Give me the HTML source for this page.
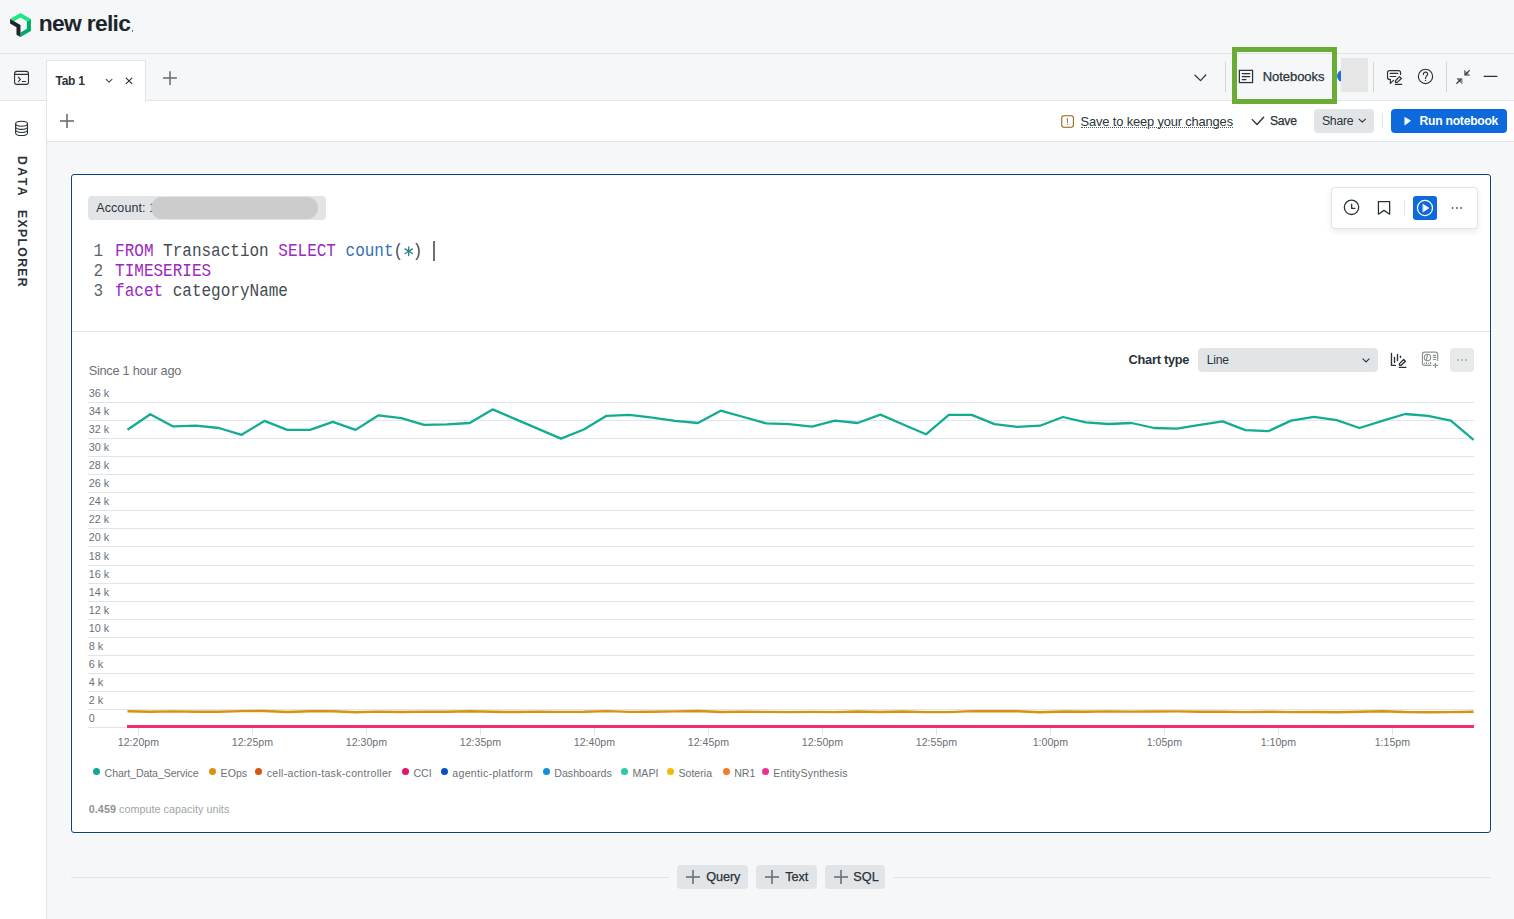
<!DOCTYPE html>
<html><head><meta charset="utf-8"><style>
*{box-sizing:border-box;margin:0;padding:0}
html,body{width:1514px;height:919px;overflow:hidden;background:#f6f7f9;font-family:"Liberation Sans",sans-serif;color:#293338}
.a{position:absolute}
.t{position:absolute;white-space:nowrap;line-height:1}
svg{position:absolute;overflow:visible}
#hdr{left:0;top:0;width:1514px;height:54px;background:#f6f7f9;border-bottom:1px solid #e1e5e8}
#tabbar{left:0;top:54px;width:1514px;height:47px;background:#f6f7f9;border-bottom:1px solid #e1e5e8}
#side{left:0;top:101px;width:47px;height:818px;background:#fff;border-right:1px solid #e1e5e8}
#sidetop{left:0;top:54px;width:47px;height:47px}
#tab1{left:46px;top:60px;width:100px;height:42px;background:#fff;border:1px solid #e1e5e8;border-bottom:none}
#toolbar{left:47px;top:101px;width:1467px;height:41px;background:#fff;border-bottom:1px solid #e1e5e8}
#card{left:71px;top:174px;width:1420px;height:659px;background:#fff;border:1px solid #0d3f7e;border-radius:3px;box-shadow:0 0 0 1px #fff}
.sep{position:absolute;width:1px;background:#cfd3d6}
.btn-g{position:absolute;background:#e1e5e8;border-radius:4px}
</style></head><body>
<div id="hdr" class="a"></div>
<div id="side" class="a"></div>
<div id="toolbar" class="a"></div>
<div id="card" class="a"></div>
<svg style="left:10px;top:13px" width="21" height="24" viewBox="0 0 832.8 959.8">
<path fill="#00AC69" d="M672.6 332.3l-.1 296.2-254.5 147.8v183.7l414.9-239.6V239.4z"/>
<path fill="#1CE783" d="M416.3 184.2l256.5 147.9 160-92.5L416.3 0 0 240.3l160 92.5z"/>
<path fill="#1D252C" d="M256 572.1v296.2L416.3 959.8V479.8L0 239.4v184.8z"/></svg>
<div class="t" style="left:38.80px;top:12.12px;font-size:22.8px;font-weight:bold;color:#1d252c;letter-spacing:-0.690px;">new relic</div>
<div class="a" style="left:132px;top:30px;width:1.2px;height:1.6px;background:#1d252c;opacity:.6"></div>
<div id="tabbar" class="a"></div>
<div id="sidetop" class="a"></div>
<svg style="left:8px;top:64px" width="28" height="28" viewBox="0 0 919 919" fill="none" stroke-linecap="round" stroke-linejoin="round" ><g stroke="#293338" stroke-width="36"><rect x="217" y="243" width="455" height="425" rx="70"/><line x1="217" y1="342" x2="672" y2="342"/><polyline points="340,435 410,505 340,578"/><line x1="470" y1="572" x2="578" y2="572"/></g></svg>
<div id="tab1" class="a"></div>
<div class="t" style="left:55.50px;top:75.93px;font-size:11.97px;font-weight:bold;color:#293338;letter-spacing:-0.251px;">Tab 1</div>
<svg style="left:95px;top:66px" width="90" height="24" viewBox="0 0 1514 404" fill="none" stroke-linecap="round" stroke-linejoin="round" ><polyline points="188,225 235,272 285,225" stroke="#4a5256" stroke-width="20"/><g stroke="#293338" stroke-width="19"><line x1="525" y1="205" x2="620" y2="298"/><line x1="620" y1="205" x2="525" y2="298"/></g><g stroke="#6f7679" stroke-width="28" stroke-linecap="butt"><line x1="1262" y1="88" x2="1262" y2="318"/><line x1="1145" y1="202" x2="1378" y2="202"/></g></svg>
<svg style="left:1186px;top:64px" width="74" height="26" viewBox="0 0 1514 532" fill="none" stroke-linecap="round" stroke-linejoin="round" ><polyline points="185,230 297,340 405,225" stroke="#293338" stroke-width="25"/><g stroke="#293338" stroke-width="25" stroke-linecap="butt" stroke-linejoin="miter"><rect x="1092" y="130" width="270" height="250"/></g><g stroke="#293338" stroke-width="25"><line x1="1150" y1="195" x2="1305" y2="195"/><line x1="1150" y1="257" x2="1305" y2="257"/><line x1="1150" y1="318" x2="1225" y2="318"/></g></svg>
<div class="sep" style="left:1225px;top:62px;height:30px"></div>
<div class="t" style="left:1262.80px;top:70.45px;font-size:13px;font-weight:normal;color:#293338;letter-spacing:-0.067px;-webkit-text-stroke:0.25px #293338">Notebooks</div>
<div class="a" style="left:1337.4px;top:70px;width:12px;height:12px;border-radius:50%;background:#1d6ce0"></div>
<div class="a" style="left:1341px;top:58px;width:27px;height:34px;background:#e6e6e6"></div>
<div class="a" style="left:1232px;top:47px;width:105px;height:57px;border:5px solid #6aac35"></div>
<div class="sep" style="left:1373px;top:62px;height:30px"></div>
<svg style="left:1380px;top:64px" width="60" height="26" viewBox="0 0 1514 656" fill="none" stroke-linecap="round" stroke-linejoin="round" ><g stroke="#293338" stroke-width="30"><path d="M518 265V215A50 50 0 0 0 468 165H240A50 50 0 0 0 190 215V340A50 50 0 0 0 240 390H262V490L340 412"/><line x1="258" y1="238" x2="448" y2="238"/><line x1="258" y1="315" x2="398" y2="315"/><path d="M390 465V422L492 320L538 366L436 465z"/><line x1="385" y1="515" x2="548" y2="515"/><circle cx="1148" cy="313" r="180"/><path d="M1098 266A52 52 0 1 1 1193 283C1172 310 1148 322 1148 365"/></g><circle cx="1148" cy="415" r="17" fill="#293338"/></svg>
<div class="sep" style="left:1446px;top:62px;height:30px"></div>
<svg style="left:1440px;top:62px" width="70" height="30" viewBox="0 0 1514 649" fill="none" stroke-linecap="round" stroke-linejoin="round" ><g stroke="#293338" stroke-width="26"><line x1="635" y1="185" x2="555" y2="265"/><line x1="365" y1="460" x2="445" y2="380"/><line x1="955" y1="313" x2="1230" y2="313"/></g><path d="M532 188L532 288L632 288z" fill="#293338" fill-opacity=".55" stroke="#293338" stroke-opacity=".6" stroke-width="20"/><path d="M468 362L368 362L468 462z" fill="#293338" fill-opacity=".55" stroke="#293338" stroke-opacity=".6" stroke-width="20"/></svg>
<svg style="left:60px;top:114px" width="14" height="14" viewBox="0 0 14 14" fill="none" stroke-linecap="round" stroke-linejoin="round" ><g stroke="#6f7679" stroke-width="1.7" stroke-linecap="butt"><line x1="7" y1="0" x2="7" y2="14"/><line x1="0" y1="7" x2="14" y2="7"/></g></svg>
<svg style="left:1050px;top:108px" width="90" height="26" viewBox="0 0 1514 437" fill="none" stroke-linecap="round" stroke-linejoin="round" ><rect x="198" y="130" width="195" height="192" rx="35" stroke="#8f5f0d" stroke-width="17"/><line x1="293" y1="175" x2="293" y2="243" stroke="#8f5f0d" stroke-width="15"/><circle cx="293" cy="275" r="10" fill="#8f5f0d"/></svg>
<div class="t" style="left:1080.60px;top:116.13px;font-size:12.9px;font-weight:normal;color:#293338;letter-spacing:-0.156px;">Save to keep your changes</div>
<div class="a" style="left:1081px;top:127px;width:152px;height:0;border-top:1px dotted #505d62"></div>
<svg style="left:1245px;top:106px" width="175" height="30" viewBox="0 0 1514 260" fill="none" stroke-linecap="round" stroke-linejoin="round" ><polyline points="62,118 103,160 160,97" stroke="#293338" stroke-width="12"/></svg>
<div class="t" style="left:1269.90px;top:114.82px;font-size:12.21px;font-weight:normal;color:#293338;letter-spacing:-0.246px;-webkit-text-stroke:0.25px #293338">Save</div>
<div class="btn-g" style="left:1314px;top:109px;width:60px;height:24px"></div>
<div class="t" style="left:1321.90px;top:114.76px;font-size:12.28px;font-weight:normal;color:#293338;letter-spacing:-0.247px;">Share</div>
<svg style="left:1245px;top:106px" width="175" height="30" viewBox="0 0 1514 260" fill="none" stroke-linecap="round" stroke-linejoin="round" ><polyline points="988,113 1015,140 1042,113" stroke="#293338" stroke-width="10"/></svg>
<div class="sep" style="left:1382px;top:113px;height:15px;background:#e1e5e8"></div>
<div class="a" style="left:1391px;top:109px;width:116px;height:24px;background:#0e69db;border-radius:4px"></div>
<svg style="left:1390px;top:106px" width="124" height="30" viewBox="0 0 1514 366" fill="none" stroke-linecap="round" stroke-linejoin="round" ><path d="M185 142L250 180L185 228z" fill="#fff" stroke="#fff" stroke-width="10"/></svg>
<div class="t" style="left:1419.60px;top:115.18px;font-size:12.14px;font-weight:bold;color:#fff;letter-spacing:-0.249px;">Run notebook</div>
<svg style="left:8px;top:114px" width="28" height="28" viewBox="0 0 919 919" fill="none" stroke-linecap="round" stroke-linejoin="round" ><g stroke="#293338" stroke-width="36"><ellipse cx="445" cy="320" rx="195" ry="80"/><path d="M250 320V620A195 85 0 0 0 640 620V320"/><path d="M250 420A195 85 0 0 0 640 420"/><path d="M250 520A195 85 0 0 0 640 520"/></g></svg>
<div class="t" style="left:28px;top:156px;font-size:12.3px;font-weight:bold;color:#293338;letter-spacing:2.4px;transform-origin:0 0;transform:rotate(90deg)">DATA</div>
<div class="t" style="left:28px;top:210px;font-size:12.3px;font-weight:bold;color:#293338;letter-spacing:1.3px;transform-origin:0 0;transform:rotate(90deg)">EXPLORER</div>
<div class="btn-g" style="left:88px;top:196px;width:238px;height:24px"></div>
<div class="t" style="left:96.20px;top:202.28px;font-size:12.5px;font-weight:normal;color:#293338;letter-spacing:0.104px;">Account: 1</div>
<div class="a" style="left:151px;top:197px;width:167px;height:22px;border-radius:11px;background:#cccccc"></div>
<div class="t" style="left:93.5px;top:244.3px;font-family:'Liberation Mono',monospace;font-size:16px;line-height:16px;color:#5a6469;transform:scaleY(1.15);transform-origin:0 12.2px">1</div><div class="t" style="left:115.1px;top:244.3px;font-family:'Liberation Mono',monospace;font-size:16px;line-height:16px;color:#454d51;white-space:pre;transform:scaleY(1.15);transform-origin:0 12.2px"><span style="color:#9c28bf">FROM</span> Transaction <span style="color:#9c28bf">SELECT</span> <span style="color:#3470b5">count</span>( )</div>
<div class="t" style="left:93.5px;top:264.3px;font-family:'Liberation Mono',monospace;font-size:16px;line-height:16px;color:#5a6469;transform:scaleY(1.15);transform-origin:0 12.2px">2</div><div class="t" style="left:115.1px;top:264.3px;font-family:'Liberation Mono',monospace;font-size:16px;line-height:16px;color:#454d51;white-space:pre;transform:scaleY(1.15);transform-origin:0 12.2px"><span style="color:#9c28bf">TIMESERIES</span></div>
<div class="t" style="left:93.5px;top:284.3px;font-family:'Liberation Mono',monospace;font-size:16px;line-height:16px;color:#5a6469;transform:scaleY(1.15);transform-origin:0 12.2px">3</div><div class="t" style="left:115.1px;top:284.3px;font-family:'Liberation Mono',monospace;font-size:16px;line-height:16px;color:#454d51;white-space:pre;transform:scaleY(1.15);transform-origin:0 12.2px"><span style="color:#9c28bf">facet</span> categoryName</div>
<svg style="left:400px;top:242px" width="18" height="18" viewBox="0 0 18 18" fill="none" stroke-linecap="round" stroke-linejoin="round" ><g stroke="#2a7f86" stroke-width="1.3"><line x1="8.7" y1="4.8" x2="8.7" y2="13.6"/><line x1="5" y1="6.9" x2="12.4" y2="11.5"/><line x1="12.4" y1="6.9" x2="5" y2="11.5"/></g></svg>
<div class="a" style="left:433px;top:241px;width:2px;height:20px;background:#6b7075"></div>
<div class="a" style="left:1331px;top:187px;width:147px;height:42px;background:#fff;border:1px solid #e1e5e8;border-radius:4px;box-shadow:0 3px 6px rgba(0,0,0,0.08)"></div>
<div class="a" style="left:1413px;top:196px;width:24px;height:24px;background:#0e69db;border-radius:3px"></div>
<svg style="left:1340px;top:196px" width="130" height="24" viewBox="0 0 1514 280" fill="none" stroke-linecap="round" stroke-linejoin="round" ><g stroke="#293338" stroke-width="15"><circle cx="133" cy="132" r="84"/><polyline points="135,95 135,145 172,145"/><path d="M447 65H578V212L512 168L447 212z"/></g><line x1="750" y1="48" x2="750" y2="228" stroke="#e1e5e8" stroke-width="12"/><circle cx="990" cy="140" r="88" stroke="#fff" stroke-width="15"/><path d="M970 98L1035 140L970 184z" fill="#fff" stroke="#fff" stroke-width="8"/><g fill="#505d62"><circle cx="1312" cy="140" r="11"/><circle cx="1362" cy="140" r="11"/><circle cx="1412" cy="140" r="11"/></g></svg>
<div class="a" style="left:72px;top:331px;width:1418px;height:1px;background:#e1e5e8"></div>
<div class="t" style="left:1128.60px;top:353.56px;font-size:12.75px;font-weight:bold;color:#293338;letter-spacing:-0.250px;">Chart type</div>
<div class="btn-g" style="left:1198px;top:348px;width:180px;height:24px"></div>
<div class="t" style="left:1206.80px;top:354.08px;font-size:12.14px;font-weight:normal;color:#293338;letter-spacing:-0.248px;">Line</div>
<svg style="left:1362px;top:358px" width="8" height="5" viewBox="0 0 8 5" fill="none" stroke="#293338" stroke-width="1.1"><polyline points="0.6,0.6 4,4 7.4,0.6"/></svg>
<svg style="left:1385px;top:348px" width="60" height="24" viewBox="0 0 1514 606" fill="none" stroke-linecap="round" stroke-linejoin="round">
<g stroke="#293338" stroke-width="34"><polyline points="163,135 163,440 262,440"/><line x1="240" y1="238" x2="240" y2="368"/><line x1="315" y1="162" x2="315" y2="315"/><line x1="390" y1="208" x2="390" y2="243"/>
<path d="M365 438L365 395L470 290L513 333L408 438z"/><line x1="360" y1="490" x2="525" y2="490"/></g>
<g stroke="#8e9494" stroke-width="30"><path d="M1160 440H1000A55 55 0 0 1 945 385V160A55 55 0 0 1 1000 105H1275A55 55 0 0 1 1330 160V318"/>
<circle cx="1073" cy="238" r="80"/><line x1="1073" y1="165" x2="1045" y2="300"/><line x1="1218" y1="185" x2="1280" y2="185"/><line x1="1218" y1="238" x2="1280" y2="238"/><line x1="1218" y1="290" x2="1280" y2="290"/>
<line x1="995" y1="390" x2="995" y2="392"/><line x1="1047" y1="370" x2="1047" y2="395"/><line x1="1097" y1="390" x2="1097" y2="392"/><line x1="1150" y1="362" x2="1150" y2="395"/>
<line x1="1273" y1="385" x2="1273" y2="495"/><line x1="1218" y1="440" x2="1328" y2="440"/></g></svg>
<div class="a" style="left:1450px;top:348px;width:24px;height:24px;background:#e8e9e9;border-radius:4px"></div>
<svg style="left:1457px;top:359px" width="10" height="2" viewBox="0 0 10 2" fill="#b9bdbd"><rect x="0" y="0" width="2" height="2"/><rect x="4" y="0" width="2" height="2"/><rect x="8" y="0" width="2" height="2"/></svg>
<div class="t" style="left:88.70px;top:365.45px;font-size:12.76px;font-weight:normal;color:#6b7075;letter-spacing:-0.251px;">Since 1 hour ago</div>
<svg style="left:0;top:0" width="1514" height="919" viewBox="0 0 1514 919">
<line x1="88" y1="402.5" x2="1474" y2="402.5" stroke="#e1e5e8" stroke-width="1"/>
<line x1="88" y1="420.5" x2="1474" y2="420.5" stroke="#e1e5e8" stroke-width="1"/>
<line x1="88" y1="438.5" x2="1474" y2="438.5" stroke="#e1e5e8" stroke-width="1"/>
<line x1="88" y1="456.5" x2="1474" y2="456.5" stroke="#e1e5e8" stroke-width="1"/>
<line x1="88" y1="474.5" x2="1474" y2="474.5" stroke="#e1e5e8" stroke-width="1"/>
<line x1="88" y1="492.5" x2="1474" y2="492.5" stroke="#e1e5e8" stroke-width="1"/>
<line x1="88" y1="510.5" x2="1474" y2="510.5" stroke="#e1e5e8" stroke-width="1"/>
<line x1="88" y1="528.5" x2="1474" y2="528.5" stroke="#e1e5e8" stroke-width="1"/>
<line x1="88" y1="546.5" x2="1474" y2="546.5" stroke="#e1e5e8" stroke-width="1"/>
<line x1="88" y1="565.5" x2="1474" y2="565.5" stroke="#e1e5e8" stroke-width="1"/>
<line x1="88" y1="583.5" x2="1474" y2="583.5" stroke="#e1e5e8" stroke-width="1"/>
<line x1="88" y1="601.5" x2="1474" y2="601.5" stroke="#e1e5e8" stroke-width="1"/>
<line x1="88" y1="619.5" x2="1474" y2="619.5" stroke="#e1e5e8" stroke-width="1"/>
<line x1="88" y1="637.5" x2="1474" y2="637.5" stroke="#e1e5e8" stroke-width="1"/>
<line x1="88" y1="655.5" x2="1474" y2="655.5" stroke="#e1e5e8" stroke-width="1"/>
<line x1="88" y1="673.5" x2="1474" y2="673.5" stroke="#e1e5e8" stroke-width="1"/>
<line x1="88" y1="691.5" x2="1474" y2="691.5" stroke="#e1e5e8" stroke-width="1"/>
<line x1="88" y1="709.5" x2="1474" y2="709.5" stroke="#e1e5e8" stroke-width="1"/>
<line x1="88" y1="727.5" x2="1474" y2="727.5" stroke="#e1e5e8" stroke-width="1"/>
</svg>
<div class="t" style="left:88.70px;top:388.32px;font-size:10.8px;font-weight:normal;color:#6b7075;letter-spacing:0.000px;">36 k</div>
<div class="t" style="left:88.70px;top:406.32px;font-size:10.8px;font-weight:normal;color:#6b7075;letter-spacing:0.000px;">34 k</div>
<div class="t" style="left:88.70px;top:424.32px;font-size:10.8px;font-weight:normal;color:#6b7075;letter-spacing:0.000px;">32 k</div>
<div class="t" style="left:88.70px;top:442.32px;font-size:10.8px;font-weight:normal;color:#6b7075;letter-spacing:0.000px;">30 k</div>
<div class="t" style="left:88.70px;top:460.32px;font-size:10.8px;font-weight:normal;color:#6b7075;letter-spacing:0.000px;">28 k</div>
<div class="t" style="left:88.70px;top:478.32px;font-size:10.8px;font-weight:normal;color:#6b7075;letter-spacing:0.000px;">26 k</div>
<div class="t" style="left:88.70px;top:496.32px;font-size:10.8px;font-weight:normal;color:#6b7075;letter-spacing:0.000px;">24 k</div>
<div class="t" style="left:88.70px;top:514.32px;font-size:10.8px;font-weight:normal;color:#6b7075;letter-spacing:0.000px;">22 k</div>
<div class="t" style="left:88.70px;top:532.32px;font-size:10.8px;font-weight:normal;color:#6b7075;letter-spacing:0.000px;">20 k</div>
<div class="t" style="left:88.70px;top:551.32px;font-size:10.8px;font-weight:normal;color:#6b7075;letter-spacing:0.000px;">18 k</div>
<div class="t" style="left:88.70px;top:569.32px;font-size:10.8px;font-weight:normal;color:#6b7075;letter-spacing:0.000px;">16 k</div>
<div class="t" style="left:88.70px;top:587.32px;font-size:10.8px;font-weight:normal;color:#6b7075;letter-spacing:0.000px;">14 k</div>
<div class="t" style="left:88.70px;top:605.32px;font-size:10.8px;font-weight:normal;color:#6b7075;letter-spacing:0.000px;">12 k</div>
<div class="t" style="left:88.70px;top:623.32px;font-size:10.8px;font-weight:normal;color:#6b7075;letter-spacing:0.000px;">10 k</div>
<div class="t" style="left:88.70px;top:641.32px;font-size:10.8px;font-weight:normal;color:#6b7075;letter-spacing:0.000px;">8 k</div>
<div class="t" style="left:88.70px;top:659.32px;font-size:10.8px;font-weight:normal;color:#6b7075;letter-spacing:0.000px;">6 k</div>
<div class="t" style="left:88.70px;top:677.32px;font-size:10.8px;font-weight:normal;color:#6b7075;letter-spacing:0.000px;">4 k</div>
<div class="t" style="left:88.70px;top:695.32px;font-size:10.8px;font-weight:normal;color:#6b7075;letter-spacing:0.000px;">2 k</div>
<div class="t" style="left:88.70px;top:713.32px;font-size:10.8px;font-weight:normal;color:#6b7075;letter-spacing:0.000px;">0</div>
<div class="t" style="left:117.78px;top:736.99px;font-size:10.6px;font-weight:normal;color:#6b7075;letter-spacing:0.000px;">12:20pm</div>
<div class="t" style="left:231.78px;top:736.99px;font-size:10.6px;font-weight:normal;color:#6b7075;letter-spacing:0.000px;">12:25pm</div>
<div class="t" style="left:345.78px;top:736.99px;font-size:10.6px;font-weight:normal;color:#6b7075;letter-spacing:0.000px;">12:30pm</div>
<div class="t" style="left:459.78px;top:736.99px;font-size:10.6px;font-weight:normal;color:#6b7075;letter-spacing:0.000px;">12:35pm</div>
<div class="t" style="left:573.78px;top:736.99px;font-size:10.6px;font-weight:normal;color:#6b7075;letter-spacing:0.000px;">12:40pm</div>
<div class="t" style="left:687.78px;top:736.99px;font-size:10.6px;font-weight:normal;color:#6b7075;letter-spacing:0.000px;">12:45pm</div>
<div class="t" style="left:801.78px;top:736.99px;font-size:10.6px;font-weight:normal;color:#6b7075;letter-spacing:0.000px;">12:50pm</div>
<div class="t" style="left:915.78px;top:736.99px;font-size:10.6px;font-weight:normal;color:#6b7075;letter-spacing:0.000px;">12:55pm</div>
<div class="t" style="left:1032.72px;top:736.99px;font-size:10.6px;font-weight:normal;color:#6b7075;letter-spacing:0.000px;">1:00pm</div>
<div class="t" style="left:1146.72px;top:736.99px;font-size:10.6px;font-weight:normal;color:#6b7075;letter-spacing:0.000px;">1:05pm</div>
<div class="t" style="left:1260.72px;top:736.99px;font-size:10.6px;font-weight:normal;color:#6b7075;letter-spacing:0.000px;">1:10pm</div>
<div class="t" style="left:1374.72px;top:736.99px;font-size:10.6px;font-weight:normal;color:#6b7075;letter-spacing:0.000px;">1:15pm</div>
<svg style="left:0;top:0" width="1514" height="919" viewBox="0 0 1514 919">
<line x1="138.5" y1="728" x2="138.5" y2="735" stroke="#e1e5e8" stroke-width="1"/>
<line x1="252.5" y1="728" x2="252.5" y2="735" stroke="#e1e5e8" stroke-width="1"/>
<line x1="366.5" y1="728" x2="366.5" y2="735" stroke="#e1e5e8" stroke-width="1"/>
<line x1="480.5" y1="728" x2="480.5" y2="735" stroke="#e1e5e8" stroke-width="1"/>
<line x1="594.5" y1="728" x2="594.5" y2="735" stroke="#e1e5e8" stroke-width="1"/>
<line x1="708.5" y1="728" x2="708.5" y2="735" stroke="#e1e5e8" stroke-width="1"/>
<line x1="822.5" y1="728" x2="822.5" y2="735" stroke="#e1e5e8" stroke-width="1"/>
<line x1="936.5" y1="728" x2="936.5" y2="735" stroke="#e1e5e8" stroke-width="1"/>
<line x1="1050.5" y1="728" x2="1050.5" y2="735" stroke="#e1e5e8" stroke-width="1"/>
<line x1="1164.5" y1="728" x2="1164.5" y2="735" stroke="#e1e5e8" stroke-width="1"/>
<line x1="1278.5" y1="728" x2="1278.5" y2="735" stroke="#e1e5e8" stroke-width="1"/>
<line x1="1392.5" y1="728" x2="1392.5" y2="735" stroke="#e1e5e8" stroke-width="1"/>
<polyline points="127.5,429.7 150.3,414.2 173.1,426.4 195.9,425.7 218.8,428.0 241.6,434.8 264.4,420.9 287.2,429.9 310.0,429.9 332.8,421.8 355.6,429.9 378.5,415.3 401.3,418.1 424.1,424.8 446.9,424.4 469.7,423.0 492.5,409.4 515.4,419.1 538.2,428.9 561.0,438.6 583.8,429.5 606.6,415.8 629.4,414.9 652.2,417.7 675.1,420.9 697.9,423.0 720.7,410.7 743.5,417.0 766.3,423.4 789.1,424.1 812.0,426.7 834.8,420.7 857.6,423.0 880.4,414.6 903.2,424.5 926.0,434.3 948.8,414.9 971.7,414.9 994.5,424.1 1017.3,426.9 1040.1,425.7 1062.9,417.0 1085.7,422.4 1108.5,424.0 1131.4,423.0 1154.2,428.0 1177.0,428.6 1199.8,424.9 1222.6,421.4 1245.4,430.1 1268.2,431.2 1291.1,420.6 1313.9,416.9 1336.7,420.1 1359.5,428.0 1382.3,420.9 1405.1,414.0 1428.0,415.9 1450.8,420.6 1473.6,439.9" fill="none" stroke="#13ac92" stroke-width="2.3" stroke-linejoin="round"/>
<polyline points="127.5,711.3 150.3,711.7 173.1,711.4 195.9,711.7 218.8,711.8 241.6,711.1 264.4,711.0 287.2,712.0 310.0,711.3 332.8,711.3 355.6,712.2 378.5,711.6 401.3,712.0 424.1,711.6 446.9,711.8 469.7,711.2 492.5,711.8 515.4,712.0 538.2,711.6 561.0,711.9 583.8,711.8 606.6,711.1 629.4,711.9 652.2,711.7 675.1,711.4 697.9,711.0 720.7,712.0 743.5,711.6 766.3,711.9 789.1,712.1 812.0,711.9 834.8,712.1 857.6,711.5 880.4,712.0 903.2,711.5 926.0,712.1 948.8,712.1 971.7,711.1 994.5,711.2 1017.3,711.3 1040.1,712.2 1062.9,711.5 1085.7,711.8 1108.5,711.4 1131.4,711.6 1154.2,711.5 1177.0,711.4 1199.8,711.7 1222.6,711.7 1245.4,712.1 1268.2,711.8 1291.1,712.1 1313.9,712.0 1336.7,712.2 1359.5,711.8 1382.3,711.2 1405.1,712.0 1428.0,712.2 1450.8,712.1 1473.6,711.7" fill="none" stroke="#d6940e" stroke-width="2.4" stroke-linejoin="round"/>
<line x1="127" y1="726.5" x2="1474" y2="726.5" stroke="#f0306e" stroke-width="3"/>
</svg>
<div class="a" style="left:93.1px;top:768px;width:7px;height:7px;border-radius:50%;background:#11a88f"></div>
<div class="t" style="left:104.60px;top:767.69px;font-size:10.6px;font-weight:normal;color:#6b7075;letter-spacing:-0.085px;">Chart_Data_Service</div>
<div class="a" style="left:209.1px;top:768px;width:7px;height:7px;border-radius:50%;background:#d6940e"></div>
<div class="t" style="left:220.60px;top:767.69px;font-size:10.6px;font-weight:normal;color:#6b7075;letter-spacing:0.000px;">EOps</div>
<div class="a" style="left:255.2px;top:768px;width:7px;height:7px;border-radius:50%;background:#d9530d"></div>
<div class="t" style="left:266.70px;top:767.69px;font-size:10.6px;font-weight:normal;color:#6b7075;letter-spacing:0.276px;">cell-action-task-controller</div>
<div class="a" style="left:401.9px;top:768px;width:7px;height:7px;border-radius:50%;background:#e0146b"></div>
<div class="t" style="left:413.40px;top:767.69px;font-size:10.6px;font-weight:normal;color:#6b7075;letter-spacing:0.000px;">CCI</div>
<div class="a" style="left:440.8px;top:768px;width:7px;height:7px;border-radius:50%;background:#0b4fc1"></div>
<div class="t" style="left:452.30px;top:767.69px;font-size:10.6px;font-weight:normal;color:#6b7075;letter-spacing:0.300px;">agentic-platform</div>
<div class="a" style="left:542.7px;top:768px;width:7px;height:7px;border-radius:50%;background:#1190d8"></div>
<div class="t" style="left:554.20px;top:767.69px;font-size:10.6px;font-weight:normal;color:#6b7075;letter-spacing:0.041px;">Dashboards</div>
<div class="a" style="left:621.0px;top:768px;width:7px;height:7px;border-radius:50%;background:#2ccaa8"></div>
<div class="t" style="left:632.50px;top:767.69px;font-size:10.6px;font-weight:normal;color:#6b7075;letter-spacing:0.000px;">MAPI</div>
<div class="a" style="left:666.9px;top:768px;width:7px;height:7px;border-radius:50%;background:#f5b90a"></div>
<div class="t" style="left:678.40px;top:767.69px;font-size:10.6px;font-weight:normal;color:#6b7075;letter-spacing:0.016px;">Soteria</div>
<div class="a" style="left:722.7px;top:768px;width:7px;height:7px;border-radius:50%;background:#f57b2a"></div>
<div class="t" style="left:734.20px;top:767.69px;font-size:10.6px;font-weight:normal;color:#6b7075;letter-spacing:0.000px;">NR1</div>
<div class="a" style="left:761.7px;top:768px;width:7px;height:7px;border-radius:50%;background:#ee2f90"></div>
<div class="t" style="left:773.20px;top:767.69px;font-size:10.6px;font-weight:normal;color:#6b7075;letter-spacing:0.139px;">EntitySynthesis</div>
<div class="t" style="left:88.80px;top:803.62px;font-size:10.8px;font-weight:normal;color:#a0a5a5;letter-spacing:0.024px;"><b style="color:#8e9494">0.459</b> compute capacity units</div>
<div class="a" style="left:71px;top:877px;width:1420px;height:1px;background:#e1e5e8"></div>
<div class="a" style="left:669px;top:860px;width:224px;height:34px;background:#f6f7f9"></div>
<div class="btn-g" style="left:677px;top:865px;width:71px;height:24px"></div>
<svg style="left:686px;top:870px" width="14" height="14" viewBox="0 0 14 14" fill="none" stroke-linecap="round" stroke-linejoin="round" ><g stroke="#6f7679" stroke-width="1.7" stroke-linecap="butt"><line x1="7" y1="0" x2="7" y2="14"/><line x1="0" y1="7" x2="14" y2="7"/></g></svg>
<div class="t" style="left:706.30px;top:870.71px;font-size:12.7px;font-weight:normal;color:#293338;letter-spacing:-0.127px;-webkit-text-stroke:0.25px #293338">Query</div>
<div class="btn-g" style="left:756px;top:865px;width:61px;height:24px"></div>
<svg style="left:765px;top:870px" width="14" height="14" viewBox="0 0 14 14" fill="none" stroke-linecap="round" stroke-linejoin="round" ><g stroke="#6f7679" stroke-width="1.7" stroke-linecap="butt"><line x1="7" y1="0" x2="7" y2="14"/><line x1="0" y1="7" x2="14" y2="7"/></g></svg>
<div class="t" style="left:785.30px;top:870.71px;font-size:12.7px;font-weight:normal;color:#293338;letter-spacing:-0.101px;-webkit-text-stroke:0.25px #293338">Text</div>
<div class="btn-g" style="left:825px;top:865px;width:60px;height:24px"></div>
<svg style="left:834px;top:870px" width="14" height="14" viewBox="0 0 14 14" fill="none" stroke-linecap="round" stroke-linejoin="round" ><g stroke="#6f7679" stroke-width="1.7" stroke-linecap="butt"><line x1="7" y1="0" x2="7" y2="14"/><line x1="0" y1="7" x2="14" y2="7"/></g></svg>
<div class="t" style="left:853.30px;top:870.71px;font-size:12.7px;font-weight:normal;color:#293338;letter-spacing:0.000px;-webkit-text-stroke:0.25px #293338">SQL</div>
</body></html>
